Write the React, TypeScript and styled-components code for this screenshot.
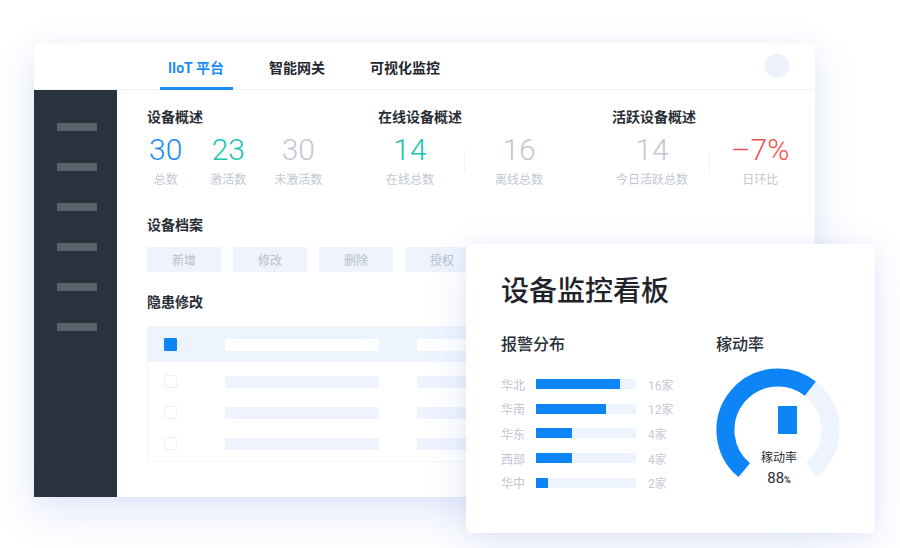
import React from "react";
import styled, { createGlobalStyle } from "styled-components";

const GlobalStyle = createGlobalStyle`
  html, body { margin: 0; padding: 0; background: #ffffff; }
  body {
    width: 900px; height: 548px; overflow: hidden;
    font-family: "Noto Sans CJK SC", "Noto Sans", sans-serif;
    -webkit-font-smoothing: antialiased;
  }
  * { box-sizing: border-box; }
`;

const CJK = `"Noto Sans CJK SC", "Noto Sans", sans-serif`;
const NUM = `Roboto, "Noto Sans CJK SC", sans-serif`;

const Stage = styled.div`
  position: relative;
  width: 900px;
  height: 548px;
  padding: 43px 0 0 34px;
`;

const MainPanel = styled.div`
  width: 781px;
  height: 454px;
  background: #ffffff;
  border-radius: 6px 6px 0 0;
  display: grid;
  grid-template-rows: 47px 1fr;
  box-shadow: 0 16px 44px rgba(80, 115, 215, 0.16), 0 0 18px rgba(80, 115, 215, 0.05);
  overflow: hidden;
`;

const Header = styled.header`
  display: flex;
  align-items: stretch;
  justify-content: space-between;
  padding: 0 26px 0 126px;
  border-bottom: 1px solid #eff2f7;
`;

const Tabs = styled.nav`
  display: flex;
  gap: 28px;
`;

const Tab = styled.div<{ $active?: boolean }>`
  position: relative;
  display: flex;
  align-items: center;
  padding: 2px 9px 0 8px;
  font-family: ${NUM};
  font-size: 14px;
  font-weight: 700;
  color: ${(p) => (p.$active ? "#1a8cf6" : "#23272e")};
  &::after {
    content: "";
    display: ${(p) => (p.$active ? "block" : "none")};
    position: absolute;
    left: 0;
    right: 0;
    bottom: -1px;
    height: 3px;
    background: #1a8cf6;
  }
`;

const Avatar = styled.div`
  align-self: center;
  width: 24px;
  height: 24px;
  border-radius: 50%;
  background: #edf2fc;
`;

const Body = styled.div`
  display: flex;
  min-height: 0;
`;

const Sidebar = styled.aside`
  width: 83px;
  background: #29333d;
  padding: 33px 0 0 23px;
  display: flex;
  flex-direction: column;
  gap: 32px;
`;

const MenuBar = styled.span`
  display: block;
  width: 40px;
  height: 8px;
  background: #59636c;
`;

const Content = styled.main`
  flex: 1;
  min-width: 0;
  padding: 16px 0 0 30px;
`;

const OverviewRow = styled.div`
  display: grid;
  grid-template-columns: 231px 234px auto;
`;

const Group = styled.section``;

const Title = styled.h3<{ $mt?: number }>`
  margin: ${(p) => p.$mt ?? 0}px 0 0;
  font-family: ${CJK};
  font-size: 14px;
  line-height: 20px;
  font-weight: 700;
  color: #2a2e35;
  white-space: nowrap;
`;

const StatRow = styled.div<{ $pl: number; $gap: number }>`
  display: flex;
  align-items: flex-start;
  margin-top: 9px;
  padding-left: ${(p) => p.$pl}px;
  gap: ${(p) => p.$gap}px;
`;

const Stat = styled.div`
  display: flex;
  flex-direction: column;
  align-items: center;
`;

const Num = styled.div<{ $color: string }>`
  font-family: ${NUM};
  font-size: 30px;
  line-height: 30px;
  font-weight: 300;
  white-space: nowrap;
  color: ${(p) => p.$color};
`;

const StatLabel = styled.div`
  margin-top: 6px;
  font-family: ${CJK};
  font-size: 12px;
  line-height: 16px;
  color: #c3c8d1;
  white-space: nowrap;
`;

const VDivider = styled.span`
  align-self: flex-start;
  margin-top: 16px;
  width: 1px;
  height: 22px;
  background: #eef1f6;
`;

const ButtonRow = styled.div`
  display: flex;
  gap: 12px;
  margin-top: 13px;
`;

const GhostButton = styled.div`
  width: 74px;
  height: 25px;
  display: flex;
  align-items: center;
  justify-content: center;
  background: #eef3fc;
  font-family: ${CJK};
  font-size: 12px;
  color: #b7bfcc;
`;

const Table = styled.div`
  margin-top: 15px;
  margin-right: 30px;
  border: 1px solid #f1f4f9;
  border-radius: 3px;
  padding-bottom: 2px;
`;

const TRow = styled.div<{ $head?: boolean }>`
  display: grid;
  grid-template-columns: 61px 192px 154px;
  align-items: center;
  height: ${(p) => (p.$head ? 35 : 31)}px;
  padding-left: 16px;
  background: ${(p) => (p.$head ? "#eef4fe" : "transparent")};
  margin-bottom: ${(p) => (p.$head ? 4 : 0)}px;
`;

const Check = styled.span<{ $on?: boolean }>`
  display: block;
  width: 13px;
  height: 13px;
  border-radius: 1px;
  background: ${(p) => (p.$on ? "#0d85f6" : "#ffffff")};
  border: 1px solid ${(p) => (p.$on ? "#0d85f6" : "#eef1f6")};
`;

const Skeleton = styled.span<{ $head?: boolean }>`
  display: block;
  width: 154px;
  height: 12px;
  background: ${(p) => (p.$head ? "#ffffff" : "#eef3fd")};
`;

/* ---------- monitor card ---------- */

const Card = styled.div`
  position: absolute;
  left: 466px;
  top: 244px;
  width: 409px;
  height: 289px;
  background: #ffffff;
  border-radius: 6px;
  box-shadow: 0 10px 40px rgba(70, 105, 210, 0.14), 0 0 14px rgba(70, 105, 210, 0.05);
  padding: 27px 20px 0 35px;
`;

const CardTitle = styled.h2`
  margin: 0;
  font-family: ${CJK};
  font-size: 28px;
  line-height: 36px;
  font-weight: 500;
  color: #1f2329;
`;

const CardGrid = styled.div`
  display: grid;
  grid-template-columns: 215px 1fr;
  margin-top: 25px;
`;

const SubTitle = styled.h4`
  margin: 0;
  font-family: ${CJK};
  font-size: 16px;
  line-height: 22px;
  font-weight: 500;
  color: #2a2e35;
`;

const BarList = styled.div`
  margin-top: 18px;
  display: flex;
  flex-direction: column;
`;

const BarRow = styled.div`
  display: flex;
  align-items: center;
  height: 24.6px;
`;

const BarLabel = styled.span`
  width: 35px;
  font-family: ${CJK};
  font-size: 12px;
  color: #c0c5cf;
`;

const Track = styled.div`
  width: 100px;
  height: 10px;
  background: #eef4fd;
`;

const Fill = styled.div`
  height: 100%;
  background: #0d85f6;
`;

const BarValue = styled.span`
  margin-left: 12px;
  font-family: ${NUM};
  font-size: 12px;
  color: #c6cad3;
`;

const Gauge = styled.div`
  position: relative;
  width: 124px;
  height: 124px;
  margin-top: 14px;
`;

const GaugeCaption = styled.div`
  position: absolute;
  left: 0;
  right: 0;
  top: 81px;
  display: flex;
  flex-direction: column;
  align-items: center;
  padding-left: 2px;
`;

const CaptionLabel = styled.span`
  font-family: ${CJK};
  font-size: 12px;
  line-height: 16px;
  color: #2a2e35;
`;

const CaptionValue = styled.span`
  margin-top: 4px;
  font-family: ${NUM};
  font-size: 15px;
  line-height: 18px;
  font-weight: 400;
  color: #2a2e35;
  & small {
    font-size: 9px;
    font-weight: 700;
  }
`;

const polar = (cx: number, cy: number, r: number, deg: number) => {
  const a = (deg * Math.PI) / 180;
  return [cx + r * Math.sin(a), cy - r * Math.cos(a)];
};

const arc = (from: number, to: number) => {
  const cx = 62,
    cy = 62,
    r = 52.5;
  const [x1, y1] = polar(cx, cy, r, from);
  const [x2, y2] = polar(cx, cy, r, to);
  const large = to - from > 180 ? 1 : 0;
  return `M ${x1.toFixed(2)} ${y1.toFixed(2)} A ${r} ${r} 0 ${large} 1 ${x2.toFixed(2)} ${y2.toFixed(2)}`;
};

const stats = [
  {
    title: "设备概述",
    pl: 2,
    gap: 28,
    items: [
      { n: "30", l: "总数", c: "#1a8cf6" },
      { n: "23", l: "激活数", c: "#17c4b3" },
      { n: "30", l: "未激活数", c: "#c3c8d3" },
    ],
    divider: false,
  },
  {
    title: "在线设备概述",
    pl: 8,
    gap: 30,
    items: [
      { n: "14", l: "在线总数", c: "#17c4b3" },
      { n: "16", l: "离线总数", c: "#c3c8d3" },
    ],
    divider: true,
  },
  {
    title: "活跃设备概述",
    pl: 4,
    gap: 21,
    items: [
      { n: "14", l: "今日活跃总数", c: "#c3c8d3" },
      { n: "–7%", l: "日环比", c: "#f5504f" },
    ],
    divider: true,
  },
];

const alarms = [
  { name: "华北", v: 16, w: 84 },
  { name: "华南", v: 12, w: 70 },
  { name: "华东", v: 4, w: 36 },
  { name: "西部", v: 4, w: 36 },
  { name: "华中", v: 2, w: 12 },
];

export default function App() {
  return (
    <>
      <GlobalStyle />
      <Stage>
        <MainPanel>
          <Header>
            <Tabs>
              <Tab $active>IIoT 平台</Tab>
              <Tab>智能网关</Tab>
              <Tab>可视化监控</Tab>
            </Tabs>
            <Avatar />
          </Header>
          <Body>
            <Sidebar>
              {Array.from({ length: 6 }).map((_, i) => (
                <MenuBar key={i} />
              ))}
            </Sidebar>
            <Content>
              <OverviewRow>
                {stats.map((g) => (
                  <Group key={g.title}>
                    <Title>{g.title}</Title>
                    <StatRow $pl={g.pl} $gap={g.gap}>
                      {g.items.map((s, i) => (
                        <React.Fragment key={s.l}>
                          {g.divider && i > 0 && <VDivider />}
                          <Stat>
                            <Num $color={s.c}>{s.n}</Num>
                            <StatLabel>{s.l}</StatLabel>
                          </Stat>
                        </React.Fragment>
                      ))}
                    </StatRow>
                  </Group>
                ))}
              </OverviewRow>
              <Title $mt={27}>设备档案</Title>
              <ButtonRow>
                <GhostButton>新增</GhostButton>
                <GhostButton>修改</GhostButton>
                <GhostButton>删除</GhostButton>
                <GhostButton>授权</GhostButton>
              </ButtonRow>
              <Title $mt={19}>隐患修改</Title>
              <Table>
                <TRow $head>
                  <Check $on />
                  <Skeleton $head />
                  <Skeleton $head />
                </TRow>
                {[0, 1, 2].map((i) => (
                  <TRow key={i}>
                    <Check />
                    <Skeleton />
                    <Skeleton />
                  </TRow>
                ))}
              </Table>
            </Content>
          </Body>
        </MainPanel>

        <Card>
          <CardTitle>设备监控看板</CardTitle>
          <CardGrid>
            <div>
              <SubTitle>报警分布</SubTitle>
              <BarList>
                {alarms.map((a) => (
                  <BarRow key={a.name}>
                    <BarLabel>{a.name}</BarLabel>
                    <Track>
                      <Fill style={{ width: a.w }} />
                    </Track>
                    <BarValue>{a.v}家</BarValue>
                  </BarRow>
                ))}
              </BarList>
            </div>
            <div>
              <SubTitle>稼动率</SubTitle>
              <Gauge>
                <svg width="124" height="124" viewBox="0 0 124 124">
                  <path d={arc(38, 140)} fill="none" stroke="#eef4fd" strokeWidth="18" />
                  <path d={arc(220, 398)} fill="none" stroke="#0d85f6" strokeWidth="18" />
                  <rect x="62" y="38" width="19" height="28" fill="#0d85f6" />
                </svg>
                <GaugeCaption>
                  <CaptionLabel>稼动率</CaptionLabel>
                  <CaptionValue>
                    88<small>%</small>
                  </CaptionValue>
                </GaugeCaption>
              </Gauge>
            </div>
          </CardGrid>
        </Card>
      </Stage>
    </>
  );
}
